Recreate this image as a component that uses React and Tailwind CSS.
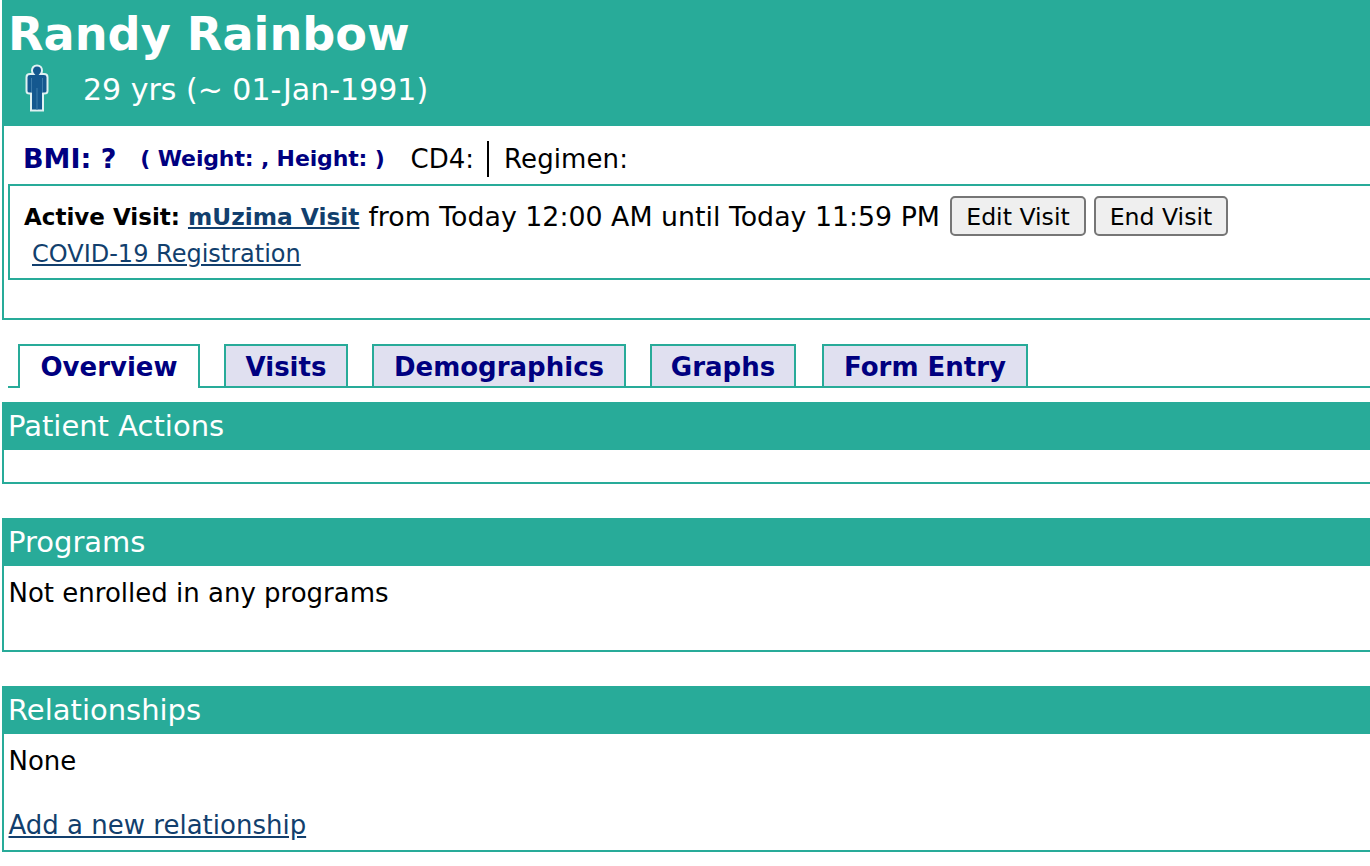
function Section({ title, bodyClass, children }) {
  return (
    <section className={`ml-[2px] border-b-2 border-l-2 border-[#28ab99] ${bodyClass}`}>
      <h2 className="-ml-[2px] flex h-[48px] items-center bg-[#28ab99] pl-[6px] text-[29px] font-normal text-white">{title}</h2>
      {children}
    </section>
  );
}
function Tab({ label, active, width, ml }) {
  return (
    <div className={`flex h-[44px] items-center justify-center border-2 border-[#28ab99] text-[26px] font-bold text-[#000080] ${width} ${ml} ${active ? "border-b-0 bg-white" : "bg-[#e0e0f0] pt-[1px]"}`}>{label}</div>
  );
}
export default function App() {
  return (
    <div className="h-[866px] w-[1370px] overflow-hidden bg-white text-[26px] leading-[32px] text-black" style={{ fontFamily: '"DejaVu Sans", Verdana, sans-serif' }}>
      <header className="ml-[2px] h-[126px] bg-[#28ab99] text-white">
        <h1 className="pl-[6px] pt-[8px] text-[46.2px] leading-[52px] font-bold">Randy Rainbow</h1>
        <div className="flex h-[60px] items-center">
          <svg width="24" height="48" viewBox="0 0 24 48" className="mb-[4px] ml-[23px] blur-[0.4px]">
            <path d="M12 1.500c3.300 0 5 2.400 5 5 0 1.500-.5 2.700-1.200 3.500H19c2.200 0 3.500 1.200 3.500 3.200V27c0 1.500-1 2.500-3 2.500h-1.500V46.500H6V29.500H4.500c-2 0-3-1-3-2.500V13.200C1.500 11.200 2.800 10 5 10h3.200C7.500 9.200 7 8 7 6.500 7 3.900 8.700 1.500 12 1.500z" fill="#14588f" stroke="#dff1f2" strokeWidth="2" />
            <path d="M12 24v22M6.500 14v14M17.500 14v14" stroke="#3d7cab" strokeWidth="1" fill="none" />
          </svg>
          <span className="ml-[34px] text-[30px]">29 yrs (~ 01-Jan-1991)</span>
        </div>
      </header>
      <div className="ml-[2px] h-[194px] border-b-2 border-l-2 border-[#28ab99]">
        <div className="flex h-[58px] items-center pt-[8px]">
          <span className="ml-[19px] text-[27px] font-bold text-[#000080]">BMI: ?</span>
          <span className="ml-[24px] text-[22px] font-bold tracking-[-0.15px] text-[#000080]">( Weight: , Height: )</span>
          <span className="ml-[26px]">CD4:</span>
          <span className="ml-[13px] mr-[15px] h-[36px] w-[2px] bg-black" />
          <span className="tracking-[0.1px]">Regimen:</span>
        </div>
        <div className="ml-[4px] h-[96px] border-y-2 border-l-2 border-[#28ab99] pl-[14px] pt-[10px]">
          <div className="flex h-[40px] items-center">
            <b className="pt-[2px] text-[23px]">Active Visit:</b>
            <a className="ml-[8px] pt-[2px] text-[23.3px] font-bold text-[#123f6d] underline">mUzima Visit</a>
            <span className="ml-[9px] pt-[2px] text-[26.8px]">from Today 12:00 AM until Today 11:59 PM</span>
            <button className="ml-[10px] h-[40px] w-[136px] rounded-[5px] border-2 border-[#767676] bg-[#efefef] pt-[1px] text-[23.6px]">Edit Visit</button>
            <button className="ml-[8px] h-[40px] w-[134px] rounded-[5px] border-2 border-[#767676] bg-[#efefef] pt-[1px] text-[23.6px]">End Visit</button>
          </div>
          <a className="ml-[8px] mt-[3px] block text-[24px] leading-[30px] text-[#123f6d] underline">COVID-19 Registration</a>
        </div>
      </div>
      <nav className="ml-[8px] mt-[24px] flex h-[44px] border-b-2 border-[#28ab99] pl-[10px]">
        <Tab label="Overview" active width="w-[182px]" ml="" />
        <Tab label="Visits" width="w-[124px]" ml="ml-[24px]" />
        <Tab label="Demographics" width="w-[254px]" ml="ml-[24px]" />
        <Tab label="Graphs" width="w-[146px]" ml="ml-[24px]" />
        <Tab label="Form Entry" width="w-[206px]" ml="ml-[26px]" />
      </nav>
      <div className="mt-[14px] flex flex-col gap-[34px]">
        <Section title="Patient Actions" bodyClass="h-[82px]" />
        <Section title="Programs" bodyClass="h-[134px]">
          <p className="pl-[4.5px] pt-[11px]">Not enrolled in any programs</p>
        </Section>
        <Section title="Relationships" bodyClass="h-[166px]">
          <p className="pl-[4.5px] pt-[11px]">None</p>
          <a className="mt-[32px] block pl-[4.5px] text-[#123f6d] underline">Add a new relationship</a>
        </Section>
      </div>
    </div>
  );
}
